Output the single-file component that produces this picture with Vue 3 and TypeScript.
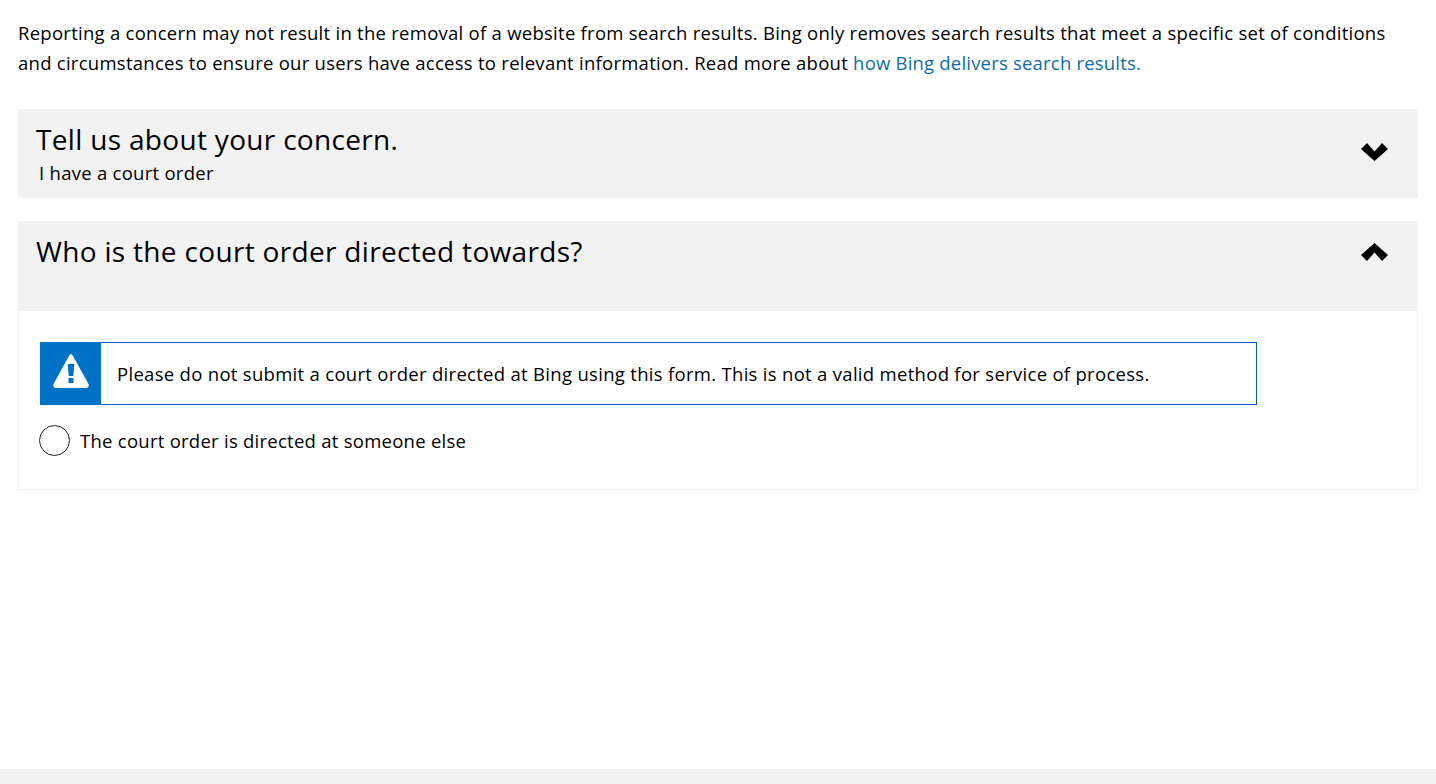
<script setup lang="ts">
const intro = 'Reporting a concern may not result in the removal of a website from search results. Bing only removes search results that meet a specific set of conditions and circumstances to ensure our users have access to relevant information. Read more about '
</script>

<template>
  <div class="page">
    <main class="content">
      <p class="intro">{{ intro }}<a class="link" href="#">how Bing delivers search results.</a></p>

      <section class="panel first">
        <div class="head head-one">
          <div>
            <h2 class="title">Tell us about your concern.</h2>
            <div class="answer">I have a court order</div>
          </div>
          <svg class="chev" width="27" height="19" viewBox="0 0 27 19"><path d="M0 7 L6 1 L13.5 9.5 L21 1 L27 7 L13.5 19 Z" fill="#000"/></svg>
        </div>
      </section>

      <section class="panel">
        <div class="head head-two">
          <h2 class="title">Who is the court order directed towards?</h2>
          <svg class="chev" width="27" height="19" viewBox="0 0 27 19"><path d="M0 12 L13.5 0 L27 12 L21 18 L13.5 9.5 L6 18 Z" fill="#000"/></svg>
        </div>
        <div class="body">
          <div class="alert">
            <div class="alert-icon">
              <svg class="warn" width="36" height="34" viewBox="0 0 36 34">
                <path d="M18 0 Q19 0 20 2 L35.5 30 Q36.5 33.5 33.5 34 L2.5 34 Q-.5 33.5 .5 30 L16 2 Q17 0 18 0 Z" fill="#fff"/>
                <path d="M14.7 10 H21.3 L20.3 22 H15.7 Z" fill="#0072c6"/>
                <rect x="15.5" y="24" width="5" height="5" fill="#0072c6"/>
              </svg>
            </div>
            <div class="alert-text">Please do not submit a court order directed at Bing using this form. This is not a valid method for service of process.</div>
          </div>
          <label class="radio-row">
            <span class="radio"></span>
            <span class="radio-label">The court order is directed at someone else</span>
          </label>
        </div>
      </section>
    </main>
    <footer class="footer"></footer>
  </div>
</template>

<style scoped>
.page {
  min-height: 784px;
  display: flex;
  flex-direction: column;
  font-family: "Open Sans", "Noto Sans", sans-serif;
  color: #000;
  background: #fff;
}
.content {
  padding: 18px 18px 0;
}
.intro {
  margin: 0;
  font-size: 18.5px;
  line-height: 30px;
  letter-spacing: 0.265px;
}
.link {
  color: #0f6cab;
  text-decoration: none;
  letter-spacing: 0.2px;
}
.panel.first {
  margin-top: 31px;
  margin-bottom: 23px;
}
.head {
  background: #f2f2f2;
  display: flex;
  justify-content: space-between;
  padding: 10px 30px 0 18px;
  box-sizing: border-box;
}
.head-one { height: 89px; }
.head-two { height: 90px; }
.title {
  margin: 0;
  font-size: 28px;
  line-height: 40px;
  font-weight: 400;
  letter-spacing: 0.32px;
}
.answer {
  margin-top: 1px;
  font-size: 18.5px;
  line-height: 26px;
  padding-left: 3px;
  letter-spacing: 0.27px;
}
.chev {
  margin-top: 23px;
}
.head-two .chev {
  margin-top: 12px;
}
.body {
  border: 1px solid #f2f2f2;
  border-top: 0;
  height: 179px;
  box-sizing: border-box;
  padding: 31px 21px 0;
}
.alert {
  width: 1217px;
  height: 63px;
  box-sizing: border-box;
  border: 1px solid #0059c7;
  display: flex;
  align-items: stretch;
}
.alert-icon {
  width: 61px;
  margin: -1px 0 -1px -1px;
  background: #0072c6;
  display: flex;
  align-items: center;
  justify-content: center;
}
.warn {
  margin: 0 0 5px 1px;
}
.alert-text {
  display: flex;
  align-items: center;
  padding-left: 16px;
  font-size: 18.5px;
  letter-spacing: 0.3px;
}
.radio-row {
  display: flex;
  align-items: center;
  margin-top: 20px;
  gap: 10px;
}
.radio {
  width: 31px;
  height: 31px;
  margin-left: -1px;
  box-sizing: border-box;
  border: 1.5px solid #222;
  border-radius: 50%;
}
.radio-label {
  font-size: 18.5px;
  letter-spacing: 0.26px;
}
.footer {
  margin-top: auto;
  height: 15px;
  background: #f2f2f2;
}
</style>
